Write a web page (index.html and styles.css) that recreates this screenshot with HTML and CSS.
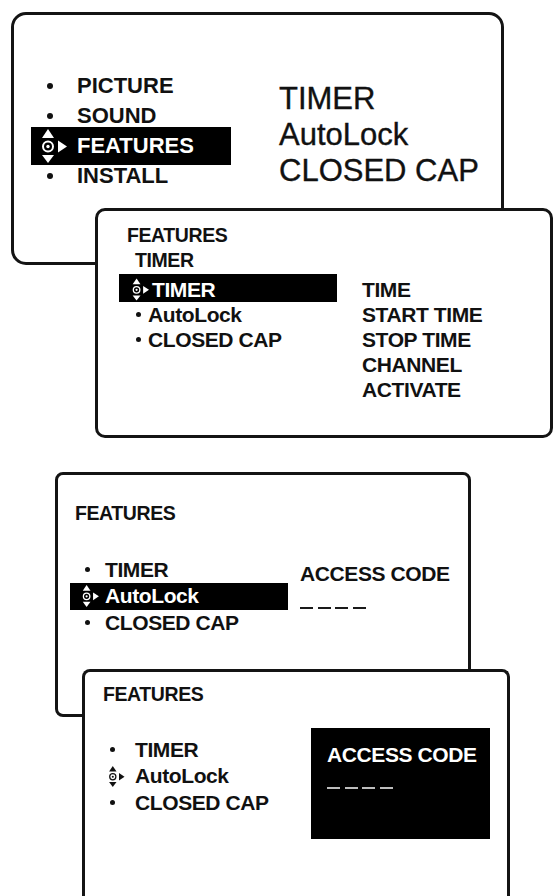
FILE: index.html
```html
<!DOCTYPE html>
<html lang="en">
<head>
<meta charset="utf-8">
<title>Features menu</title>
<link rel="stylesheet" href="styles.css">
</head>
<body>
<main class="page">

  <section class="panel p1">
    <ul class="menu m1">
      <li class="item"><span class="mark"><span class="dot"></span></span><span class="label">PICTURE</span></li>
      <li class="item"><span class="mark"><span class="dot"></span></span><span class="label">SOUND</span></li>
      <li class="item hl"><span class="mark"><svg class="nav" viewBox="0 0 26 34"><polygon points="7,0 13,9 1,9"/><circle cx="7" cy="17.5" r="5" fill="none" stroke="currentColor" stroke-width="2"/><circle cx="7" cy="17.5" r="1.7"/><polygon points="1,26 13,26 7,34"/><polygon points="17,11.5 17,23.5 26,17.5"/></svg></span><span class="label">FEATURES</span></li>
      <li class="item"><span class="mark"><span class="dot"></span></span><span class="label">INSTALL</span></li>
    </ul>
    <ul class="sub s1">
      <li>TIMER</li>
      <li>AutoLock</li>
      <li>CLOSED CAP</li>
    </ul>
  </section>

  <section class="panel p2">
    <h2 class="head">FEATURES</h2>
    <h3 class="head head2">TIMER</h3>
    <div class="cols">
      <ul class="menu m2">
        <li class="item hl"><span class="mark wide"><svg class="nav" viewBox="0 0 26 34"><polygon points="7,0 13,9 1,9"/><circle cx="7" cy="17.5" r="5" fill="none" stroke="currentColor" stroke-width="2"/><circle cx="7" cy="17.5" r="1.7"/><polygon points="1,26 13,26 7,34"/><polygon points="17,11.5 17,23.5 26,17.5"/></svg></span><span class="label">TIMER</span></li>
        <li class="item"><span class="mark"><span class="dot"></span></span><span class="label">AutoLock</span></li>
        <li class="item"><span class="mark"><span class="dot"></span></span><span class="label">CLOSED CAP</span></li>
      </ul>
      <ul class="sub s2">
        <li>TIME</li>
        <li>START TIME</li>
        <li>STOP TIME</li>
        <li>CHANNEL</li>
        <li>ACTIVATE</li>
      </ul>
    </div>
  </section>

  <section class="panel p3">
    <h2 class="head">FEATURES</h2>
    <div class="cols">
      <ul class="menu m3">
        <li class="item"><span class="mark"><span class="dot"></span></span><span class="label">TIMER</span></li>
        <li class="item hl"><span class="mark"><svg class="nav" viewBox="0 0 26 34"><polygon points="7,0 13,9 1,9"/><circle cx="7" cy="17.5" r="5" fill="none" stroke="currentColor" stroke-width="2"/><circle cx="7" cy="17.5" r="1.7"/><polygon points="1,26 13,26 7,34"/><polygon points="17,11.5 17,23.5 26,17.5"/></svg></span><span class="label">AutoLock</span></li>
        <li class="item"><span class="mark"><span class="dot"></span></span><span class="label">CLOSED CAP</span></li>
      </ul>
      <div class="code">
        <div class="code-title">ACCESS CODE</div>
        <div class="dashes"><span></span><span></span><span></span><span></span></div>
      </div>
    </div>
  </section>

  <section class="panel p4">
    <h2 class="head">FEATURES</h2>
    <div class="cols">
      <ul class="menu m4">
        <li class="item"><span class="mark"><span class="dot"></span></span><span class="label">TIMER</span></li>
        <li class="item"><span class="mark"><svg class="nav" viewBox="0 0 26 34"><polygon points="7,0 13,9 1,9"/><circle cx="7" cy="17.5" r="5" fill="none" stroke="currentColor" stroke-width="2"/><circle cx="7" cy="17.5" r="1.7"/><polygon points="1,26 13,26 7,34"/><polygon points="17,11.5 17,23.5 26,17.5"/></svg></span><span class="label">AutoLock</span></li>
        <li class="item"><span class="mark"><span class="dot"></span></span><span class="label">CLOSED CAP</span></li>
      </ul>
      <div class="code code-inv">
        <div class="code-title">ACCESS CODE</div>
        <div class="dashes"><span></span><span></span><span></span><span></span></div>
      </div>
    </div>
  </section>

</main>
</body>
</html>
```

FILE: styles.css
```css
html, body {
  margin: 0;
  padding: 0;
  background: #fff;
  overflow: hidden;
}

body {
  font-family: "Liberation Sans", Arial, sans-serif;
  color: #111;
}

.page {
  width: 554px;
  height: 896px;
  display: flex;
  flex-direction: column;
  align-items: flex-start;
}

ul {
  list-style: none;
  margin: 0;
  padding: 0;
}

h2, h3 {
  margin: 0;
  font-weight: bold;
}

.panel {
  position: relative;
  box-sizing: border-box;
  border: 3px solid #141414;
  background: #fff;
  flex: none;
}

/* ---------- generic menu items ---------- */
.item {
  display: flex;
  align-items: center;
  font-weight: bold;
  white-space: nowrap;
}

.mark {
  display: flex;
  align-items: center;
  flex: none;
}

.dot {
  display: block;
  border-radius: 50%;
  background: currentColor;
}

.nav {
  display: block;
  fill: currentColor;
  flex: none;
}

.hl {
  background: #000;
  color: #fff;
}

.head {
  font-size: 19.5px;
  line-height: 25px;
  letter-spacing: -0.4px;
}

.cols {
  display: flex;
  align-items: flex-start;
}

/* ---------- panel 1 ---------- */
.p1 {
  margin: 12px 0 0 11px;
  width: 493px;
  height: 253px;
  border-radius: 15px;
  padding: 56px 0 0 17px;
  display: flex;
  align-items: flex-start;
  gap: 48px;
}

.m1 {
  width: 200px;
}

.m1 .item {
  height: 30px;
  line-height: 30px;
  font-size: 22px;
  padding-left: 12px;
}

.m1 .mark {
  width: 34px;
  height: 30px;
}

.m1 .dot {
  width: 6px;
  height: 6px;
  margin-left: 4px;
}

.m1 .hl {
  padding-top: 4px;
  padding-bottom: 4px;
  margin: -4px 0;
}

.m1 .nav {
  width: 26px;
  height: 34px;
  margin-left: -2px;
}

.s1 {
  margin-top: 10px;
  font-size: 31px;
  line-height: 36px;
  -webkit-text-stroke: 0.35px currentColor;
}

/* ---------- panel 2 ---------- */
.p2 {
  margin: -57px 0 0 95px;
  width: 458px;
  height: 230px;
  border-radius: 10px;
  padding: 12px 0 0 21px;
}

.p2 .head {
  margin-left: 8px;
}

.p2 .head2 {
  margin-left: 16px;
}

.p2 .cols {
  margin-top: 1px;
  gap: 25px;
}

.m2 {
  width: 218px;
}

.m2 .item,
.s2 li {
  font-size: 21px;
  line-height: 25px;
  letter-spacing: -0.4px;
}

.m2 .item {
  padding-left: 13px;
}

.m2 .hl {
  padding-top: 3px;
}

.m2 .mark {
  width: 16px;
}

.m2 .mark.wide {
  width: 20px;
}

.m2 .dot {
  width: 5px;
  height: 5px;
  margin-left: 4px;
}

.m2 .nav {
  width: 17px;
  height: 23px;
}

.s2 {
  margin-top: 3px;
  font-weight: bold;
}

/* ---------- panel 3 ---------- */
.p3 {
  margin: 34px 0 0 55px;
  width: 416px;
  height: 245px;
  border-radius: 8px;
  padding: 26px 0 0 12px;
}

.p3 .head {
  margin-left: 5px;
}

.p3 .cols {
  margin-top: 30.5px;
  gap: 12px;
}

.m3 {
  width: 218px;
}

.m3 .item,
.m4 .item,
.code-title {
  font-size: 21px;
  line-height: 26.5px;
  letter-spacing: -0.4px;
}

.m3 .item {
  padding-left: 12px;
}

.m3 .mark {
  width: 23px;
}

.m3 .dot,
.m4 .dot {
  width: 5px;
  height: 5px;
  margin-left: 3px;
}

.m3 .nav {
  width: 17px;
  height: 22px;
}

.code {
  padding-top: 4px;
}

.code-title {
  font-weight: bold;
  white-space: nowrap;
}

.dashes {
  display: flex;
  gap: 4.5px;
  margin-top: 20px;
}

.dashes span {
  display: block;
  width: 13px;
  height: 2px;
  background: #1a1a1a;
}

/* ---------- panel 4 ---------- */
.p4 {
  margin: -48px 0 0 82px;
  width: 428px;
  height: 227px;
  border-bottom: none;
  border-radius: 8px 8px 0 0;
  padding: 10px 0 0 18px;
}

.p4 .cols {
  margin-top: 21px;
}

.m4 {
  width: 208px;
  padding-top: 8.5px;
}

.m4 .item {
  padding-left: 5px;
}

.m4 .mark {
  width: 27px;
}

.m4 .dot {
  margin-left: 2px;
}

.m4 .nav {
  width: 17px;
  height: 21px;
}

.code-inv {
  box-sizing: border-box;
  width: 179px;
  height: 111px;
  padding: 13.5px 0 0 16px;
  background: #000;
  color: #fff;
}

.code-inv .dashes {
  margin-top: 19px;
}

.code-inv .dashes span {
  background: #bdbdbd;
}
```
